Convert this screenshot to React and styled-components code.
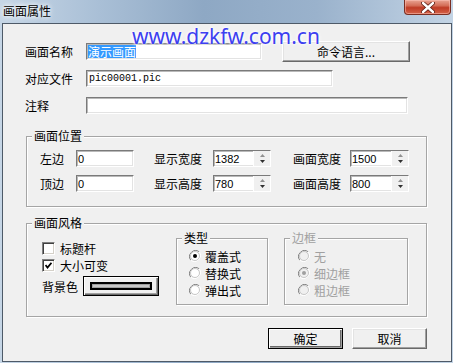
import React from "react";
import styled, { createGlobalStyle } from "styled-components";

const GlobalStyle = createGlobalStyle`
  html, body {
    margin: 0;
    padding: 0;
  }
  body {
    width: 453px;
    height: 363px;
    overflow: hidden;
    font-family: "Noto Sans CJK SC", "Liberation Sans", sans-serif;
    font-size: 12px;
    color: #000;
  }
`;

// ** Window frame
const Window = styled.div`
  position: relative;
  width: 453px;
  height: 363px;
  display: flex;
  flex-direction: column;
  background: linear-gradient(
    90deg,
    #c6d6e6 0%,
    #a9bfd6 22%,
    #8ea8c4 45%,
    #9ab2cc 70%,
    #c3d4e5 100%
  );
`;

const TitleBar = styled.div`
  height: 23px;
  display: flex;
  justify-content: space-between;
  align-items: flex-start;
`;

const Title = styled.span`
  margin: 3px 0 0 3px;
  line-height: 16px;
  font-size: 12px;
  text-shadow: 0 0 4px #fff, 0 0 6px #fff;
`;

const CloseButton = styled.div`
  width: 47px;
  height: 15px;
  margin-right: 2px;
  box-sizing: border-box;
  border: 1px solid #7a2e22;
  border-top: none;
  border-radius: 0 0 4px 4px;
  background: linear-gradient(#e9a493 0%, #d46e58 40%, #bf3b25 55%, #d4634a 100%);
  box-shadow: inset 0 0 0 1px rgba(255, 200, 190, 0.5);
  display: flex;
  align-items: center;
  justify-content: center;
`;

const Watermark = styled.div`
  position: absolute;
  left: 132px;
  top: 23px;
  font-family: "Noto Sans", "Liberation Sans", sans-serif;
  font-size: 21px;
  line-height: 26px;
  color: #3d3ff0;
  text-shadow: 0 0 2px #fff, 0 0 3px #fff, 0 0 4px #fff;
  pointer-events: none;
`;

const Client = styled.div`
  flex: 1;
  margin: 0 1px 1px 2px;
  border: 1px solid #4e5a68;
  background: #f0f0f0;
  padding: 19px 0 0 22px;
  box-sizing: border-box;
`;

// ** Top form
const FormRows = styled.div`
  display: flex;
  flex-direction: column;
  gap: 10px;
`;

const Row = styled.div`
  display: flex;
  align-items: center;
  height: 17px;
`;

const Label = styled.span`
  width: ${(p) => p.$w}px;
  margin-left: ${(p) => p.$ml || 0}px;
  flex-shrink: 0;
  line-height: 14px;
  white-space: nowrap;
  color: ${(p) => (p.$disabled ? "#a0a0a0" : "#000")};
`;

const Field = styled.div`
  width: ${(p) => p.$w}px;
  height: 17px;
  box-sizing: border-box;
  flex-shrink: 0;
  background: #fff;
  border: 1px solid;
  border-color: #7a7a7a #fff #fff #7a7a7a;
  box-shadow: inset 1px 1px 0 #b9b9b9, inset -1px -1px 0 #e3e3e3;
  padding-left: ${(p) => (p.$mono ? 2 : 1)}px;
  display: flex;
  align-items: center;
  font-family: ${(p) =>
    p.$mono ? '"Liberation Mono", monospace' : '"Liberation Sans", sans-serif'};
  font-size: ${(p) => (p.$mono ? 10 : 11)}px;
  overflow: hidden;
  white-space: nowrap;
`;

const Selected = styled.span`
  background: #3399ff;
  color: #fff;
  font-family: "Noto Sans CJK SC", sans-serif;
  font-size: 12px;
  line-height: 13px;
`;

const PushButton = styled.div`
  width: ${(p) => p.$w}px;
  height: ${(p) => p.$h}px;
  margin-left: ${(p) => p.$ml || 0}px;
  box-sizing: border-box;
  flex-shrink: 0;
  background: #f0f0f0;
  border: 1px solid;
  border-color: ${(p) =>
    p.$default ? "#000" : "#fff #696969 #696969 #fff"};
  box-shadow: ${(p) =>
    p.$default
      ? "inset 1px 1px 0 #fff, inset -1px -1px 0 #a0a0a0, inset -2px -2px 0 #696969"
      : "inset -1px -1px 0 #a0a0a0, inset 1px 1px 0 #e3e3e3"};
  display: flex;
  align-items: center;
  justify-content: center;
  line-height: 14px;
`;

// ** Group boxes
const Group = styled.div`
  position: relative;
  box-sizing: border-box;
  width: ${(p) => p.$w}px;
  height: ${(p) => p.$h}px;
  margin: ${(p) => p.$m || "0"};
  flex-shrink: 0;
  border: 1px solid #a5a5a5;
  box-shadow: inset 1px 1px 0 #fff, 1px 1px 0 #fff;
  padding: ${(p) => p.$pad || "0"};
`;

const Legend = styled.span`
  position: absolute;
  top: -8px;
  left: ${(p) => p.$left || 5}px;
  padding: 0 2px;
  background: #f0f0f0;
  line-height: 14px;
  color: ${(p) => (p.$disabled ? "#a0a0a0" : "#000")};
`;

const PosRows = styled.div`
  display: flex;
  flex-direction: column;
  gap: 8px;
`;

// ** Spin box
const Spin = styled(Field)`
  padding-right: 0;
  justify-content: space-between;
`;

const SpinButtons = styled.div`
  width: 16px;
  height: 15px;
  background: #f0f0f0;
  border-left: 1px solid #fff;
  display: flex;
  flex-direction: column;
  align-items: center;
  justify-content: center;
  gap: 3px;
`;

const SpinArrows = () => (
  <SpinButtons>
    <svg width="5" height="3" viewBox="0 0 5 3">
      <path d="M2.5 0 L5 3 L0 3 Z" fill="#909090" />
    </svg>
    <svg width="5" height="3" viewBox="0 0 5 3">
      <path d="M0 0 L5 0 L2.5 3 Z" fill="#303030" />
    </svg>
  </SpinButtons>
);

// ** Style section
const StyleBody = styled.div`
  display: flex;
  align-items: flex-start;
`;

const LeftCol = styled.div`
  width: 134px;
  margin-top: 4px;
  display: flex;
  flex-direction: column;
  gap: 4px;
  flex-shrink: 0;
`;

const CheckRow = styled.div`
  display: flex;
  align-items: center;
  gap: 5px;
  height: 13px;
`;

const Box = styled.div`
  width: 13px;
  height: 13px;
  box-sizing: border-box;
  background: #fff;
  border: 1px solid;
  border-color: #808080 #fff #fff #808080;
  box-shadow: inset 1px 1px 0 #404040, inset -1px -1px 0 #d4d0c8;
  display: flex;
  align-items: center;
  justify-content: center;
`;

const ColorRow = styled.div`
  display: flex;
  align-items: center;
  gap: 5px;
  height: 20px;
`;

const ColorButton = styled.div`
  width: 76px;
  height: 20px;
  box-sizing: border-box;
  background: #f0f0f0;
  border: 1px solid #000;
  box-shadow: inset 1px 1px 0 #fff, inset -1px -1px 0 #696969, inset -2px -2px 0 #a0a0a0;
  display: flex;
  align-items: center;
  justify-content: center;
`;

const Swatch = styled.div`
  width: 62px;
  height: 8px;
  box-sizing: border-box;
  border: 2px solid #000;
  background: #c8c8c8;
  box-shadow: inset 0 0 0 1px #a0a0a0;
`;

const RadioList = styled.div`
  display: flex;
  flex-direction: column;
  gap: 5px;
`;

const RadioRow = styled.div`
  display: flex;
  align-items: center;
  gap: 4px;
  height: 12px;
  color: ${(p) => (p.$disabled ? "#a0a0a0" : "#000")};
`;

const Radio = ({ checked, disabled }) => (
  <svg width="12" height="12" viewBox="0 0 12 12">
    <path d="M10.2 1.8 A6 6 0 0 0 1.8 10.2" fill="none" stroke="#808080" />
    <path d="M1.8 10.2 A6 6 0 0 0 10.2 1.8" fill="none" stroke="#fff" />
    <circle cx="6" cy="6" r="4.5" fill={disabled ? "#f0f0f0" : "#fff"} stroke="#c8c8c8" />
    {checked && <circle cx="6" cy="6" r="2" fill={disabled ? "#a0a0a0" : "#000"} />}
  </svg>
);

const Footer = styled.div`
  width: 401px;
  margin: 11px 0 0 1px;
  display: flex;
  justify-content: flex-end;
  gap: 9px;
`;

export default function App() {
  return (
    <>
      <GlobalStyle />
      <Window>
        <TitleBar>
          <Title>画面属性</Title>
          <CloseButton>
            <svg width="14" height="11" viewBox="0 0 14 11">
              <path
                d="M2 1 L12 10 M12 1 L2 10"
                stroke="#5a1a10"
                strokeWidth="4"
                strokeLinecap="round"
              />
              <path
                d="M2 1 L12 10 M12 1 L2 10"
                stroke="#fff"
                strokeWidth="2.4"
                strokeLinecap="round"
              />
            </svg>
          </CloseButton>
        </TitleBar>

        <Client>
          <FormRows>
            <Row>
              <Label $w={61}>画面名称</Label>
              <Field $w={176}>
                <Selected>演示画面</Selected>
              </Field>
              <PushButton $w={128} $h={21} $ml={20}>
                命令语言...
              </PushButton>
            </Row>
            <Row>
              <Label $w={61}>对应文件</Label>
              <Field $w={247} $mono>
                pic00001.pic
              </Field>
            </Row>
            <Row>
              <Label $w={61}>注释</Label>
              <Field $w={322} />
            </Row>
          </FormRows>

          <Group $w={401} $h={71} $m="22px 0 0 1px" $pad="13px 0 0 13px">
            <Legend>画面位置</Legend>
            <PosRows>
              <Row>
                <Label $w={36}>左边</Label>
                <Field $w={58}>0</Field>
                <Label $w={59} $ml={20}>
                  显示宽度
                </Label>
                <Spin $w={58}>
                  1382
                  <SpinArrows />
                </Spin>
                <Label $w={57} $ml={22}>
                  画面宽度
                </Label>
                <Spin $w={59}>
                  1500
                  <SpinArrows />
                </Spin>
              </Row>
              <Row>
                <Label $w={36}>顶边</Label>
                <Field $w={58}>0</Field>
                <Label $w={59} $ml={20}>
                  显示高度
                </Label>
                <Spin $w={58}>
                  780
                  <SpinArrows />
                </Spin>
                <Label $w={57} $ml={22}>
                  画面高度
                </Label>
                <Spin $w={59}>
                  800
                  <SpinArrows />
                </Spin>
              </Row>
            </PosRows>
          </Group>

          <Group $w={401} $h={94} $m="16px 0 0 1px" $pad="14px 0 0 15px">
            <Legend>画面风格</Legend>
            <StyleBody>
              <LeftCol>
                <CheckRow>
                  <Box />
                  <span>标题杆</span>
                </CheckRow>
                <CheckRow>
                  <Box>
                    <svg width="7" height="7" viewBox="0 0 7 7">
                      <path d="M0.5 3 L2.5 5.5 L6.5 0.8" fill="none" stroke="#000" strokeWidth="1.8" />
                    </svg>
                  </Box>
                  <span>大小可变</span>
                </CheckRow>
                <ColorRow>
                  <span>背景色</span>
                  <ColorButton>
                    <Swatch />
                  </ColorButton>
                </ColorRow>
              </LeftCol>

              <Group $w={92} $h={67} $pad="11px 0 0 12px">
                <Legend>类型</Legend>
                <RadioList>
                  <RadioRow>
                    <Radio checked />
                    覆盖式
                  </RadioRow>
                  <RadioRow>
                    <Radio />
                    替换式
                  </RadioRow>
                  <RadioRow>
                    <Radio />
                    弹出式
                  </RadioRow>
                </RadioList>
              </Group>

              <Group $w={124} $h={67} $m="0 0 0 16px" $pad="11px 0 0 13px">
                <Legend $disabled>边框</Legend>
                <RadioList>
                  <RadioRow $disabled>
                    <Radio disabled />无
                  </RadioRow>
                  <RadioRow $disabled>
                    <Radio disabled checked />
                    细边框
                  </RadioRow>
                  <RadioRow $disabled>
                    <Radio disabled />
                    粗边框
                  </RadioRow>
                </RadioList>
              </Group>
            </StyleBody>
          </Group>

          <Footer>
            <PushButton $w={75} $h={21} $default>
              确定
            </PushButton>
            <PushButton $w={75} $h={21}>
              取消
            </PushButton>
          </Footer>
        </Client>

        <Watermark>www.dzkfw.com.cn</Watermark>
      </Window>
    </>
  );
}
